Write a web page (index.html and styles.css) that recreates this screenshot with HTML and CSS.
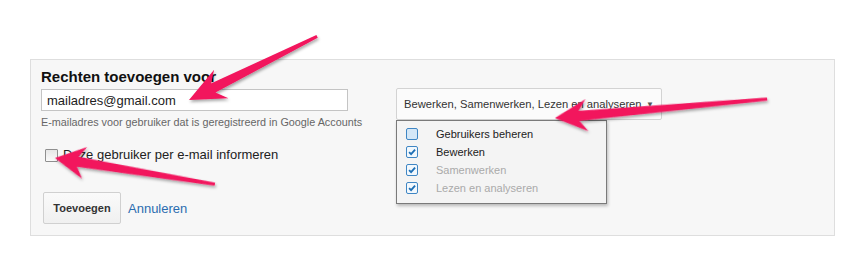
FILE: index.html
```html
<!DOCTYPE html>
<html lang="nl">
  <head>
    <meta charset="UTF-8" />
    <title>Rechten toevoegen</title>
    <link rel="stylesheet" href="styles.css">
  </head>
  <body>
    <div id="panel">
      <div class="left-col">
        <h2 class="title">Rechten toevoegen voor</h2>
        <input class="email" type="text" value="mailadres@gmail.com" />
        <div class="hint">E-mailadres voor gebruiker dat is geregistreerd in Google Accounts</div>
        <label class="notify">
          <span class="box"></span>
          Deze gebruiker per e-mail informeren
        </label>
        <div class="actions">
          <button class="add-button">Toevoegen</button>
          <a class="cancel" href="#">Annuleren</a>
        </div>
      </div>
      <div class="right-col">
        <div class="select">
          <span>Bewerken, Samenwerken, Lezen en analyseren</span>
          <span class="caret">&#9660;</span>
        </div>
        <ul class="menu">
          <li><span class="mbox"></span>Gebruikers beheren</li>
          <li><span class="mbox checked"><svg viewBox="0 0 12 12"><path d="M2.5 6.2l2.4 2.4 4.8-5.4" /></svg></span>Bewerken</li>
          <li class="disabled"><span class="mbox checked"><svg viewBox="0 0 12 12"><path d="M2.5 6.2l2.4 2.4 4.8-5.4" /></svg></span>Samenwerken</li>
          <li class="disabled"><span class="mbox checked"><svg viewBox="0 0 12 12"><path d="M2.5 6.2l2.4 2.4 4.8-5.4" /></svg></span>Lezen en analyseren</li>
        </ul>
      </div>
    </div>

    <!-- pink annotation arrows drawn over the screenshot -->
    <svg id="arrows" width="862" height="255" viewBox="0 0 862 255">
      <defs>
        <filter id="shade" x="-10%" y="-40%" width="120%" height="180%">
          <feDropShadow dx="1" dy="2" stdDeviation="1.5" flood-color="#000" flood-opacity="0.35" />
        </filter>
      </defs>
      <g filter="url(#shade)" fill="#f2145d">
        <g transform="translate(189 100) rotate(-26.4)">
          <polygon points="0,0 36,-16 27,-5 143,-1.5 143,1.5 27,5 36,16" />
        </g>
        <g transform="translate(555 118) rotate(-5.1)">
          <polygon points="0,0 32,-16 24,-5 213,-1.5 213,1.5 24,5 32,16" />
        </g>
        <g transform="translate(55 158) rotate(9.3)">
          <polygon points="0,0 30,-16 23,-5 162,-1.5 162,1.5 23,5 30,16" />
        </g>
      </g>
    </svg>
  </body>
</html>
```

FILE: styles.css
```css
body {
  margin: 0;
  padding: 0;
  background: #fff;
  font-family: "Liberation Sans", Arial, sans-serif;
  color: #222;
  position: relative;
  width: 862px;
  height: 255px;
  overflow: hidden;
}

#panel {
  margin: 59px 0 0 30px;
  width: 793px;
  height: 175px;
  background: #f7f7f7;
  border: 1px solid #dedede;
  display: flex;
  padding-left: 10px;
}

.left-col {
  width: 355px;
  padding-top: 8px;
  display: flex;
  flex-direction: column;
  align-items: flex-start;
}

.title {
  margin: 0;
  font-size: 15px;
  line-height: 18px;
  font-weight: bold;
  color: #111;
}

.email {
  margin-top: 3px;
  width: 307px;
  height: 22px;
  box-sizing: border-box;
  border: 1px solid #c4c4c4;
  background: #fff;
  padding: 0 5px;
  font-family: "Liberation Sans", Arial, sans-serif;
  font-size: 13px;
  color: #222;
  outline: none;
}

.hint {
  margin-top: 4px;
  font-size: 10.8px;
  line-height: 14px;
  color: #666;
}

.notify {
  margin-top: 18px;
  margin-left: 4px;
  display: flex;
  align-items: center;
  gap: 5px;
  font-size: 13px;
  line-height: 16px;
  color: #222;
}

.box {
  width: 11px;
  height: 11px;
  border: 1px solid #8f8f8f;
  border-radius: 1px;
  background: linear-gradient(#e6e6e6, #fafafa);
}

.actions {
  margin-top: 29px;
  margin-left: 2px;
  display: flex;
  align-items: center;
  gap: 7px;
}

.add-button {
  width: 78px;
  height: 32px;
  border: 1px solid #d0d0d0;
  border-radius: 2px;
  background: linear-gradient(#fafafa, #f0f0f0);
  font-family: "Liberation Sans", Arial, sans-serif;
  font-size: 11px;
  font-weight: bold;
  color: #333;
  padding: 0;
}

.cancel {
  font-size: 13px;
  color: #2b6cb0;
  text-decoration: none;
}

.right-col {
  margin-top: 28px;
  position: relative;
}

.select {
  width: 266px;
  height: 32px;
  box-sizing: border-box;
  border: 1px solid #d3d3d3;
  border-radius: 2px;
  background: #fbfbfb;
  display: flex;
  align-items: center;
  justify-content: space-between;
  padding: 0 7px 0 7px;
  font-size: 11.2px;
  white-space: nowrap;
  color: #333;
}

.caret {
  font-size: 8px;
  color: #555;
}

.menu {
  position: absolute;
  top: 32px;
  left: 0;
  width: 211px;
  height: 84px;
  box-sizing: border-box;
  margin: 0;
  padding: 4px 0 0 9px;
  list-style: none;
  background: #f4f4f4;
  border: 1px solid #7a7a7a;
  box-shadow: 1px 2px 3px rgba(0, 0, 0, 0.25);
}

.menu li {
  height: 18px;
  display: flex;
  align-items: center;
  font-size: 11px;
  color: #222;
}

.menu li.disabled {
  color: #aaa;
}

.mbox {
  width: 10px;
  height: 10px;
  margin-right: 18px;
  border: 1px solid #3f86c4;
  border-radius: 2px;
  background: #d4e7f7;
  display: flex;
}

.mbox.checked {
  background: #f2f8fd;
}

.mbox svg {
  width: 10px;
  height: 10px;
  fill: none;
  stroke: #1d6fb5;
  stroke-width: 2.2;
}

#arrows {
  position: absolute;
  top: 0;
  left: 0;
  pointer-events: none;
}
```
